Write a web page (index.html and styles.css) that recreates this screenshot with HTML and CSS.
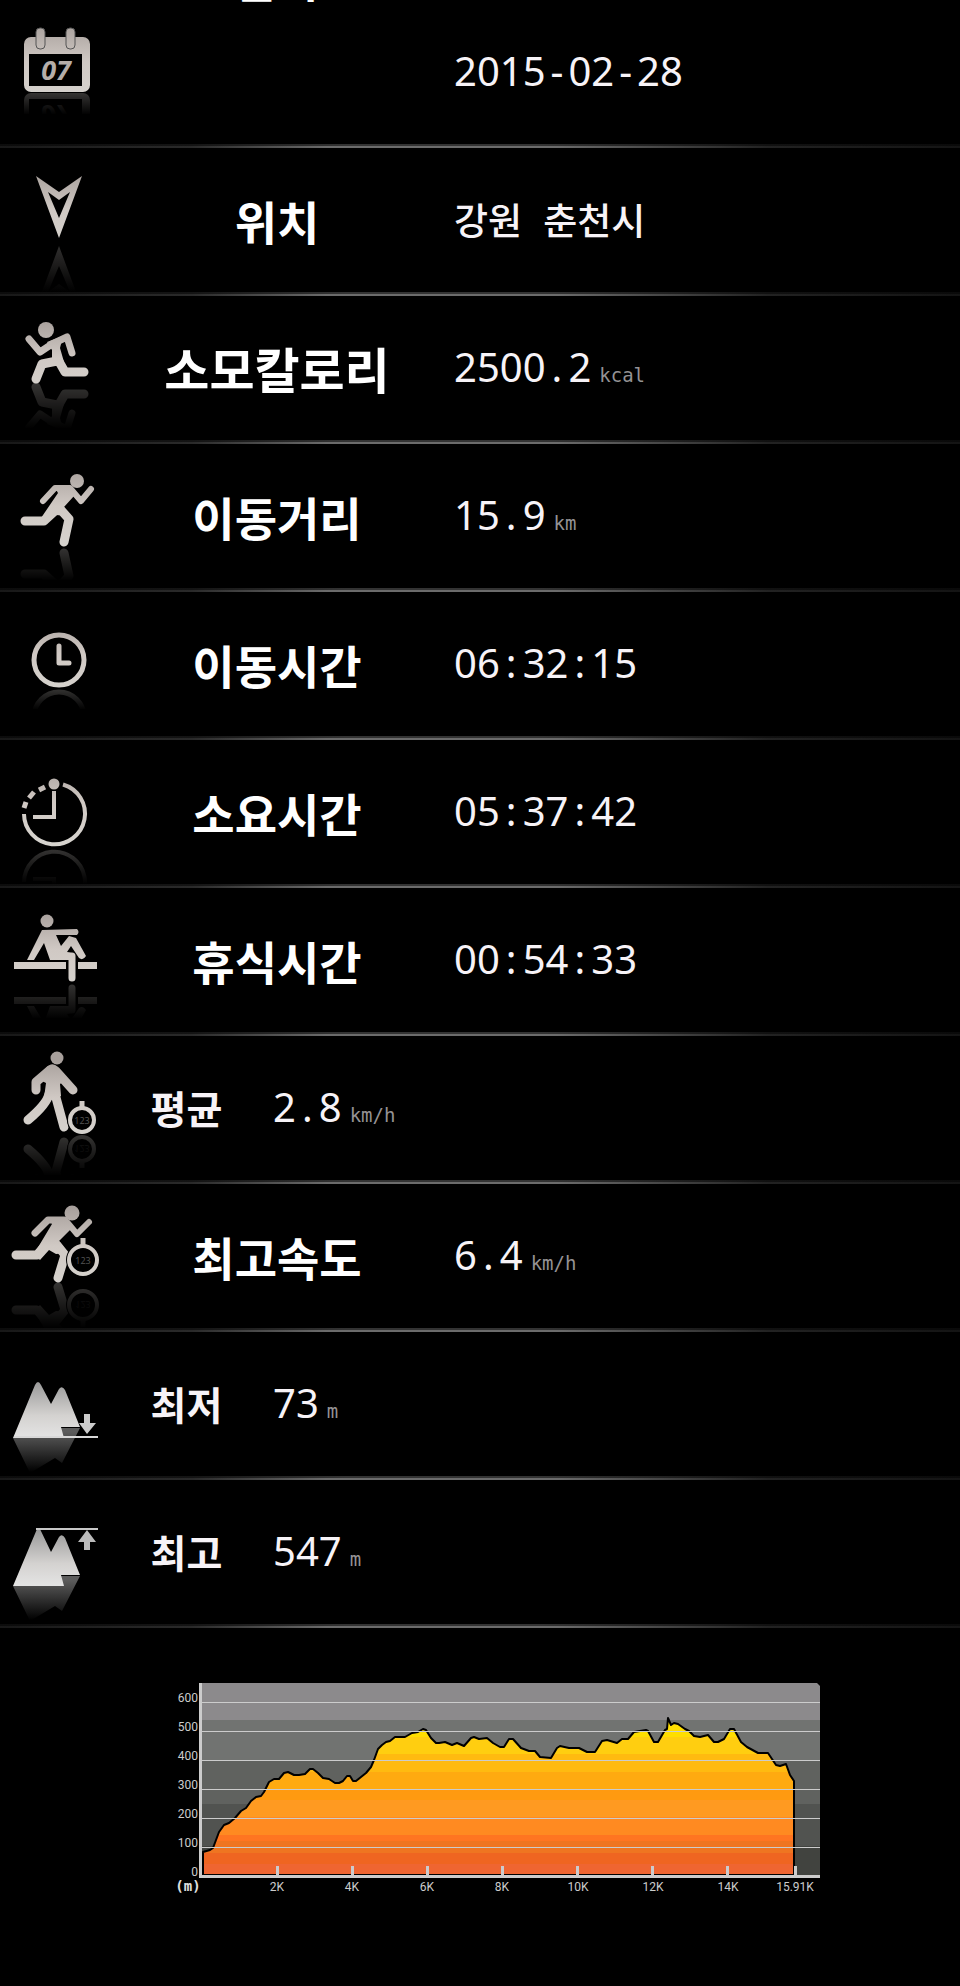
FILE: index.html
```html
<!DOCTYPE html>
<html lang="ko">
<head>
<meta charset="UTF-8">
<meta name="viewport" content="width=device-width, initial-scale=1.0">
<title>산행 기록</title>
<link rel="stylesheet" href="styles.css">
</head>
<body>
    <!-- shared gradients -->
    <svg class="defs" width="0" height="0" aria-hidden="true">
        <defs>
            <linearGradient id="metal" gradientUnits="userSpaceOnUse" x1="0" y1="24" x2="0" y2="100">
                <stop offset="0" stop-color="#a8a09c"/>
                <stop offset="0.5" stop-color="#d0c9c4"/>
                <stop offset="1" stop-color="#d6d3ce"/>
            </linearGradient>
            <linearGradient id="rock" gradientUnits="userSpaceOnUse" x1="0" y1="50" x2="0" y2="106">
                <stop offset="0" stop-color="#999"/>
                <stop offset="0.6" stop-color="#d4d2d0"/>
                <stop offset="1" stop-color="#e4e4e4"/>
            </linearGradient>
            <linearGradient id="rockShadow" gradientUnits="userSpaceOnUse" x1="0" y1="100" x2="0" y2="140">
                <stop offset="0" stop-color="#5c5c5c"/>
                <stop offset="1" stop-color="#000"/>
            </linearGradient>
            <linearGradient id="fade" x1="0" y1="0" x2="0" y2="1">
                <stop offset="0" stop-color="#000" stop-opacity="0"/>
                <stop offset="1" stop-color="#000"/>
            </linearGradient>
        </defs>
    </svg>

    <ul class="log">
        <li class="row">
            <svg class="icon" viewBox="0 0 100 144" aria-hidden="true">
                <g id="calendar">
                    <rect class="fill" x="24" y="37" width="66" height="55" rx="7"/>
                    <rect class="hole" x="29" y="54" width="53" height="32"/>
                    <rect class="fill ring" x="36" y="28" width="9" height="21" rx="4"/>
                    <rect class="fill ring" x="66" y="28" width="9" height="21" rx="4"/>
                    <text class="icon-day" x="56" y="80">07</text>
                </g>
                <use class="mirror" href="#calendar" transform="translate(0 185) scale(1 -1)"/>
                <rect class="fade" x="0" y="93" width="100" height="22"/>
                <rect class="hole" x="0" y="114" width="100" height="30"/>
            </svg>
            <span class="label label-top">날짜</span>
            <span class="value">2015<i>-</i>02<i>-</i>28</span>
        </li>
        <li class="row">
            <svg class="icon" viewBox="0 0 100 144" aria-hidden="true">
                <path id="pointer" class="fill" fill-rule="evenodd" d="M36 28L59 44L82 28L59 90ZM48 44L59 70L70 44L59 52Z"/>
                <use class="mirror" href="#pointer" transform="translate(0 188) scale(1 -1)"/>
                <rect class="fade" x="0" y="94" width="100" height="50"/>
            </svg>
            <span class="label">위치</span>
            <span class="value value-text">강원<i> </i>춘천시</span>
        </li>
        <li class="row">
            <svg class="icon" viewBox="0 0 100 144" aria-hidden="true">
                <g id="calorie">
                    <circle class="fill" cx="46" cy="34" r="8"/>
                    <path class="line w7" d="M29 43L40 56L52 48L67 41L72 57"/>
                    <path class="fill" d="M47 46L63 40L60 52L64 66L52 66L52 54Z"/>
                    <path class="line w8" d="M57 62L65 76L84 76M57 65L42 68L36 83"/>
                </g>
                <use class="mirror" href="#calorie" transform="translate(0 174) scale(1 -1)"/>
                <rect class="fade" x="0" y="87" width="100" height="46"/>
                <rect class="hole" x="0" y="132" width="100" height="12"/>
            </svg>
            <span class="label label-wide">소모칼로리</span>
            <span class="value">2500<i>.</i>2<small>kcal</small></span>
        </li>
        <li class="row">
            <svg class="icon" viewBox="0 0 100 144" aria-hidden="true">
                <g id="distance">
                    <circle class="fill" cx="77" cy="37" r="7"/>
                    <path class="line w6" d="M43 57L55 44L70 44L81 57L91 45"/>
                    <path class="fill" d="M54 42L72 42L74 52L64 63L69 72L56 71L46 77L41 74L58 49Z"/>
                    <path class="line w8" d="M25 77L44 77L56 66M61 66L69 75L64 98"/>
                </g>
                <use class="mirror" href="#distance" transform="translate(0 207) scale(1 -1)"/>
                <rect class="fade" x="0" y="103" width="100" height="34"/>
                <rect class="hole" x="0" y="136" width="100" height="8"/>
            </svg>
            <span class="label">이동거리</span>
            <span class="value">15<i>.</i>9<small>km</small></span>
        </li>
        <li class="row">
            <svg class="icon" viewBox="0 0 100 144" aria-hidden="true">
                <g id="clock">
                    <circle class="line w5" cx="59" cy="68" r="25"/>
                    <path class="line w5" d="M59 54V71H69"/>
                </g>
                <use class="mirror" href="#clock" transform="translate(0 193) scale(1 -1)"/>
                <rect class="fade" x="0" y="96" width="100" height="22"/>
                <rect class="hole" x="0" y="117" width="100" height="27"/>
            </svg>
            <span class="label">이동시간</span>
            <span class="value">06<i>:</i>32<i>:</i>15</span>
        </li>
        <li class="row">
            <svg class="icon" viewBox="0 0 100 144" aria-hidden="true">
                <g id="elapsed">
                    <path class="line w4 butt" d="M63 44.5A30.5 30.5 0 1 1 24 74"/>
                    <path class="line w5 butt" d="M24 68L26 62M29 58L34 52M39 50L45 47"/>
                    <circle class="fill" cx="54" cy="44" r="5.5"/>
                    <path class="line w4 butt" d="M54 51V77H33"/>
                </g>
                <use class="mirror" href="#elapsed" transform="translate(0 216) scale(1 -1)"/>
                <rect class="fade" x="0" y="108" width="100" height="36"/>
            </svg>
            <span class="label">소요시간</span>
            <span class="value">05<i>:</i>37<i>:</i>42</span>
        </li>
        <li class="row">
            <svg class="icon" viewBox="0 0 100 144" aria-hidden="true">
                <g id="rest">
                    <circle class="fill" cx="47" cy="33" r="6.5"/>
                    <rect class="fill" x="14" y="74" width="83" height="7"/>
                    <path class="fill" d="M42 42L77 41Q80 44 77 47L56 47L61 58L69 48L76 50L86 68Q83 73 79 70L71 58L67 64L75 66V72L50 72L44 55L34 72L27 72L40 46Z"/>
                    <path class="hole" d="M66 74H78V81H66Z"/>
                    <path class="line w7" d="M65 68H72V90"/>
                </g>
                <use class="mirror" href="#rest" transform="translate(0 190) scale(1 -1)"/>
                <rect class="fade" x="0" y="95" width="100" height="36"/>
                <rect class="hole" x="0" y="130" width="100" height="14"/>
            </svg>
            <span class="label">휴식시간</span>
            <span class="value">00<i>:</i>54<i>:</i>33</span>
        </li>
        <li class="row row-short">
            <svg class="icon" viewBox="0 0 100 144" aria-hidden="true">
                <g id="walk">
                    <circle class="fill" cx="57" cy="22" r="6.5"/>
                    <path class="line w8" d="M50 34L36 46L36 54M56 35L73 54"/>
                    <path class="fill" d="M46 32Q52 25 58 31L66 44L60 48L61 60L53 64L44 62L46 47L40 44Z"/>
                    <path class="line w8" d="M49 58Q47 68 28 84M55 58L64 91"/>
                    <circle class="hole" cx="82" cy="84" r="15"/>
                    <circle class="line w4" cx="82" cy="84" r="12"/>
                    <path class="line w5 butt" d="M82 65V72"/>
                    <text class="icon-watch" x="82" y="88">123</text>
                </g>
                <use class="mirror" href="#walk" transform="translate(0 197) scale(1 -1)"/>
                <rect class="fade" x="0" y="98" width="100" height="42"/>
                <rect class="hole" x="0" y="139" width="100" height="5"/>
            </svg>
            <span class="label">평균</span>
            <span class="value">2<i>.</i>8<small>km/h</small></span>
        </li>
        <li class="row">
            <svg class="icon" viewBox="0 0 100 144" aria-hidden="true">
                <g id="topspeed">
                    <circle class="fill" cx="72" cy="29" r="7.5"/>
                    <path class="line w7" d="M35 49L48 36L64 36"/>
                    <path class="line w6" d="M67 38L77 50L89 38"/>
                    <path class="fill" d="M48 33L67 33L72 44L59 57L68 69L56 70L49 66L40 76L34 70L52 40Z"/>
                    <path class="line w8" d="M16 71L37 71L50 56M57 61L65 71L58 94"/>
                    <circle class="hole" cx="83" cy="76" r="17"/>
                    <circle class="line w4" cx="83" cy="76" r="14"/>
                    <path class="line w5 butt" d="M83 54V62"/>
                    <text class="icon-watch" x="83" y="80">123</text>
                </g>
                <use class="mirror" href="#topspeed" transform="translate(0 197) scale(1 -1)"/>
                <rect class="fade" x="0" y="98" width="100" height="46"/>
            </svg>
            <span class="label">최고속도</span>
            <span class="value">6<i>.</i>4<small>km/h</small></span>
        </li>
        <li class="row row-short">
            <svg class="icon" viewBox="0 0 100 144" aria-hidden="true">
                <path fill="url(#rockShadow)" d="M13 106L30 141L55 126L62 131L80 96H60V106Z"/>
                <path fill="url(#rock)" d="M13 106L35 53Q38 47 41 53L51 72L59 57Q62 53 65 58L80 95H61L64 106Z"/>
                <path stroke="#d8d8d8" stroke-width="2" d="M14 105H98"/>
                <path fill="#ccc" d="M84 82H90V91H96L87 102L79 91H84Z"/>
            </svg>
            <span class="label">최저</span>
            <span class="value">73<small>m</small></span>
        </li>
        <li class="row row-short">
            <svg class="icon" viewBox="0 0 100 144" aria-hidden="true">
                <path fill="url(#rockShadow)" d="M13 106L30 141L55 126L62 131L80 96H60V106Z"/>
                <path fill="url(#rock)" d="M13 106L37 49H40L51 72L59 57Q62 53 65 58L80 95H61L64 106Z"/>
                <path stroke="#c8c8c8" stroke-width="2" d="M36 49H98"/>
                <path fill="#bbb" d="M87 50L96 62H90V70H84V62H78Z"/>
            </svg>
            <span class="label">최고</span>
            <span class="value">547<small>m</small></span>
        </li>
    </ul>

    <!-- elevation profile -->
    <div class="chart">
        <svg class="chart-svg" viewBox="0 0 680 230" role="img" aria-label="고도">
            <defs>
                <clipPath id="plot">
                    <path d="M62 10H677L680 13V202H62Z"/>
                </clipPath>
                <clipPath id="area">
                    <use href="#profile"/>
                </clipPath>
            </defs>
            <g clip-path="url(#plot)">
                <rect fill="#8c8a8c" x="62" y="10" width="618" height="37"/>
                <rect fill="#717371" x="62" y="47" width="618" height="41"/>
                <rect fill="#60625f" x="62" y="88" width="618" height="43"/>
                <rect fill="#515350" x="62" y="131" width="618" height="42"/>
                <rect fill="#41433f" x="62" y="173" width="618" height="29"/>
            </g>
            <g clip-path="url(#area)">
                <rect fill="#ffde00" x="62" y="40" width="594" height="24"/>
                <rect fill="#ffce10" x="62" y="64" width="594" height="17"/>
                <rect fill="#ffba10" x="62" y="81" width="594" height="18"/>
                <rect fill="#ffaa10" x="62" y="99" width="594" height="18"/>
                <rect fill="#ff9a10" x="62" y="117" width="594" height="10"/>
                <rect fill="#ff9a21" x="62" y="127" width="594" height="17"/>
                <rect fill="#ff8a21" x="62" y="144" width="594" height="18"/>
                <rect fill="#ff7521" x="62" y="162" width="594" height="6"/>
                <rect fill="#ef7521" x="62" y="168" width="594" height="12"/>
                <rect fill="#ef6521" x="62" y="180" width="594" height="11"/>
                <rect fill="#ef6531" x="62" y="191" width="594" height="11"/>
            </g>
            <path id="profile" class="profile" d="M63 202V179L70 177L73 175L76 167L79 159L84 152L89 150L95 145L101 138L106 135L111 128L116 124L121 123L124 119L129 109L134 106L139 106L144 100L148 99L154 102L159 102L165 101L170 96L173 96L178 100L183 105L189 106L195 110L199 110L203 108L207 103L210 103L213 108L216 108L221 104L226 100L231 94L234 87L238 76L242 72L246 69L250 68L255 64L265 64L272 60L278 59L283 56L286 57L291 65L296 70L299 70L305 69L312 72L317 70L324 73L331 65L334 64L339 66L347 65L353 70L360 74L364 74L369 66L373 66L381 75L389 78L395 78L400 84L411 85L417 75L420 73L429 75L439 75L447 79L455 79L462 68L467 67L477 70L482 66L488 66L494 59L500 58L506 57L508 58L514 69L518 69L525 57L527 56L528 45L531 52L534 50L538 51L545 56L549 58L554 63L560 64L568 62L574 69L578 69L584 66L590 56L594 56L601 69L607 74L618 80L628 80L636 92L640 93L646 91L650 102L654 108V202Z"/>
            <path class="grid" d="M62 29.5H680M62 58.5H680M62 87.5H680M62 116.5H680M62 145.5H680M62 174.5H680"/>
            <path class="axis" d="M60.5 10V203.5H680"/>
            <path class="axis" d="M137.5 193V203M212.5 193V203M287.5 193V203M362.5 193V203M437.5 193V203M512.5 193V203M587.5 193V203M655.5 193V203"/>
            <g class="ticks ticks-y">
                <text x="58" y="29">600</text>
                <text x="58" y="58">500</text>
                <text x="58" y="87">400</text>
                <text x="58" y="116">300</text>
                <text x="58" y="145">200</text>
                <text x="58" y="174">100</text>
                <text x="58" y="203">0</text>
            </g>
            <g class="ticks ticks-x">
                <text x="137" y="218">2K</text>
                <text x="212" y="218">4K</text>
                <text x="287" y="218">6K</text>
                <text x="362" y="218">8K</text>
                <text x="438" y="218">10K</text>
                <text x="513" y="218">12K</text>
                <text x="588" y="218">14K</text>
                <text x="655" y="218">15.91K</text>
            </g>
            <text class="unit" x="48" y="218">(m)</text>
        </svg>
    </div>
</body>
</html>
```

FILE: styles.css
```css
body {
    margin: 0;
    background-color: #000;
    color: #f7f3f7;
    font-family: "Noto Sans", "Noto Sans CJK KR", sans-serif;
}
.defs {
    position: absolute;
}
.log {
    list-style: none;
    margin: 0;
    padding: 0;
    overflow: hidden;
}
.row {
    display: grid;
    grid-template-columns: 100px 354px 1fr;
    align-items: center;
    box-sizing: border-box;
    height: 148px;
    padding-bottom: 4px;
    /* glowing divider, brighter on its lower half */
    background-image:
        linear-gradient(to right, #181818, #2a2a2a 20%, #6b6b6b 34%, #6b6b6b 58%, #222 80%, #141414),
        linear-gradient(to right, #0c0c0c, #141414 20%, #333 36%, #333 56%, #111 80%, #0a0a0a);
    background-repeat: no-repeat;
    background-size: 100% 2px, 100% 4px;
    background-position: bottom;
}
.row-short {
    grid-template-columns: 100px 173px 1fr;
}

/* icons */
.icon {
    display: block;
    width: 100px;
    height: 144px;
}
.fill {
    fill: url(#metal);
}
.hole {
    fill: #000;
}
.ring {
    stroke: #555;
    stroke-width: 1;
}
.line {
    fill: none;
    stroke: url(#metal);
    stroke-linecap: round;
    stroke-linejoin: round;
}
.butt {
    stroke-linecap: butt;
    stroke-linejoin: miter;
}
.w4 { stroke-width: 4; }
.w5 { stroke-width: 5; }
.w6 { stroke-width: 6; }
.w7 { stroke-width: 7; }
.w8 { stroke-width: 9; }
.mirror {
    opacity: 0.25;
}
.fade {
    fill: url(#fade);
}
.icon-day {
    fill: #b5aeaa;
    font: italic bold 27px "Open Sans", sans-serif;
    text-anchor: middle;
}
.icon-watch {
    fill: #555;
    font: 9px "Open Sans", sans-serif;
    text-anchor: middle;
}

/* texts */
.label {
    color: #fff;
    font-family: "Noto Sans CJK KR", sans-serif;
    font-size: 46px;
    font-weight: bold;
    line-height: 60px;
    text-align: center;
    white-space: nowrap;
}
.label-wide {
    font-size: 49px;
}
.row-short .label {
    color: #f7f3f7;
    font-size: 39px;
    padding-bottom: 2px;
}
/* name of the first record is scrolled out above the edge */
.label-top {
    align-self: start;
    margin-top: -53px;
}
.value {
    font-size: 40px;
    line-height: 60px;
    padding-bottom: 2px;
    white-space: nowrap;
}
.value-text {
    font-family: "Noto Sans CJK KR", sans-serif;
    font-size: 37px;
    font-weight: 500;
}
/* separators take the width of a digit */
.value i {
    display: inline-block;
    width: 1ch;
    font-style: normal;
    line-height: 1;
    text-align: center;
    white-space: pre;
}
.value small {
    margin-left: 8px;
    color: #949294;
    font-family: "DejaVu Sans Mono", monospace;
    font-size: 19px;
    line-height: 1;
}

/* chart */
.chart {
    padding: 45px 0 83px;
}
.chart-svg {
    display: block;
    width: 680px;
    max-width: 100%;
    margin: 0 auto;
}
.profile {
    fill: none;
    stroke: #000;
    stroke-width: 2;
    stroke-linejoin: round;
}
.grid {
    stroke: #ccc;
    stroke-width: 1;
}
.axis {
    fill: none;
    stroke: #ccc;
    stroke-width: 3;
}
.ticks {
    fill: #ccc;
    font-family: Roboto, sans-serif;
    font-size: 12px;
}
.ticks-y {
    text-anchor: end;
}
.ticks-x {
    text-anchor: middle;
}
.unit {
    fill: #e0e0e0;
    font: bold 14px "DejaVu Sans Mono", monospace;
    text-anchor: middle;
}
```
